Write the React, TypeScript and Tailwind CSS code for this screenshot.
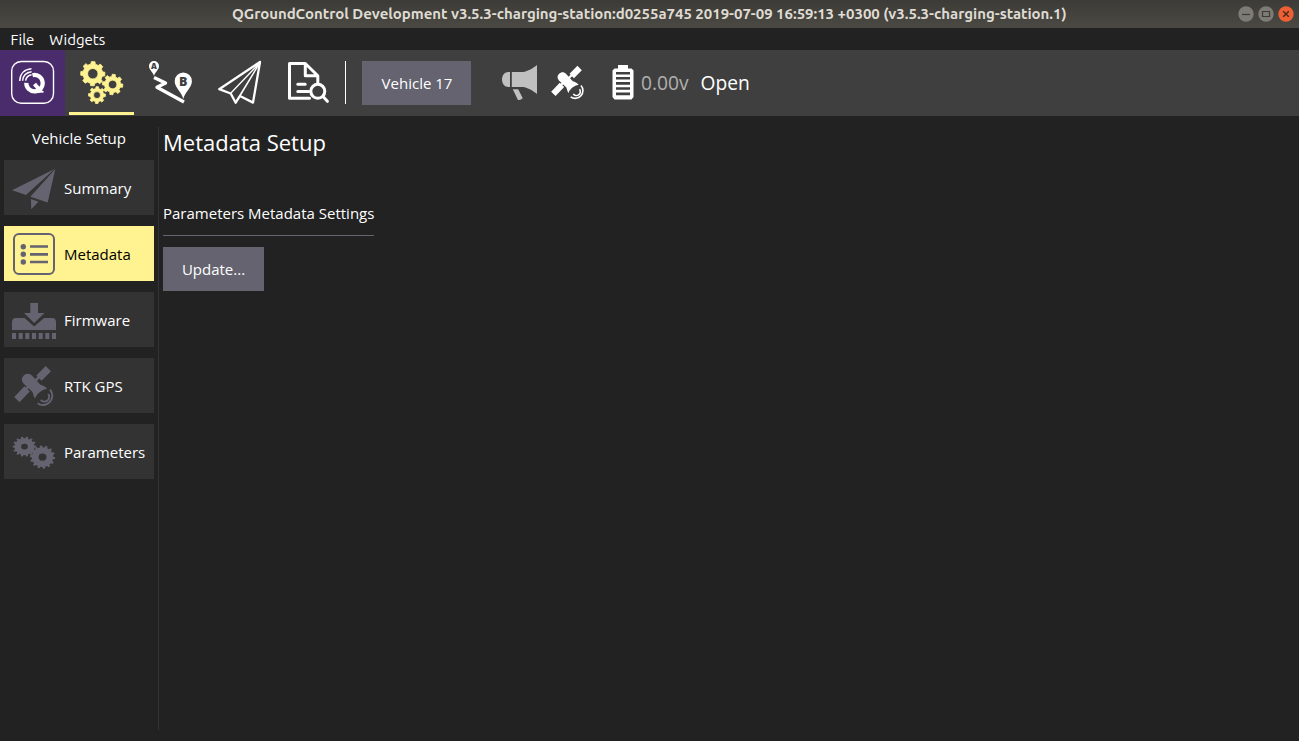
import React from 'react';

const polar = (cx: number, cy: number, r: number, a: number) =>
  `${(cx + r * Math.cos(a)).toFixed(2)} ${(cy + r * Math.sin(a)).toFixed(2)}`;

function gear(cx: number, cy: number, outer: number, inner: number, hole: number, teeth: number, phase = 0) {
  const step = (Math.PI * 2) / teeth;
  const points: string[] = [];
  for (let i = 0; i < teeth; i++) {
    const a = i * step + phase;
    points.push(polar(cx, cy, inner, a - step * 0.29));
    points.push(polar(cx, cy, outer, a - step * 0.19));
    points.push(polar(cx, cy, outer, a + step * 0.19));
    points.push(polar(cx, cy, inner, a + step * 0.29));
  }
  return `M${points.join('L')}ZM${cx - hole} ${cy}a${hole} ${hole} 0 1 0 ${hole * 2} 0a${hole} ${hole} 0 1 0 ${-hole * 2} 0Z`;
}

function LogoIcon() {
  return (
    <svg className="h-[66px] w-[65px]" viewBox="0 0 65 66" fill="none" stroke="#fff">
      <rect x="11.7" y="11.5" width="41.8" height="41.8" rx="9.5" strokeWidth="1.4" />
      <path d="M32.5 25.2A8.2 8.200 0 1 1 26.300 32.800" strokeWidth="4.200" />
      <path d="M34.500 34l6.500 7.500" strokeWidth="4" />
      <path d="M38 41.800h5.500" strokeWidth="1.800" />
      <path d="M25.600 30.600c.6-3.300 2.500-5.200 6-5.800M22.600 30.800c.4-5 3.500-8.300 9-9M19.700 31c.2-7 4.500-11.800 11.800-12.300" strokeWidth="1.500" />
    </svg>
  );
}

function GearsIcon() {
  return (
    <svg className="h-[62px] w-[65px]" viewBox="0 0 65 62" fill="#fff291" fillRule="evenodd" stroke="#fff291" strokeLinejoin="round" strokeWidth=".8">
      <path d={gear(23.8, 23.7, 12.2, 9.9, 5.2, 8, 0.03)} />
      <path d={gear(43.6, 34.5, 10.3, 8.1, 4.3, 8, 0.12)} />
      <path d={gear(28, 45.1, 8.500, 6.700, 3.500, 8, 0.03)} />
    </svg>
  );
}

function PlanIcon() {
  return (
    <svg className="h-[66px] w-[65px]" viewBox="0 0 65 66">
      <path d="M16 27.500l11.500 5.500-8.500 4.300 27 14.700" fill="none" stroke="#fff" strokeWidth="3.400" strokeLinejoin="round" />
      <path d="M16 26c-1-4-5-6-5-10a5 5 0 0 1 10 0c0 4-4 6-5 10ZM45.300 49c-1.500-7-8.600-11.500-8.600-17.800a8.600 8.600 0 0 1 17.200 0C53.900 37.500 46.800 42 45.300 49Z" fill="#fff" />
      <text x="16" y="19" textAnchor="middle" fontSize="8" fontWeight="800" fill="#3f3f3f" fontFamily="Open Sans, sans-serif">A</text>
      <text x="45.300" y="35.800" textAnchor="middle" fontSize="12.500" fontWeight="800" fill="#3f3f3f" fontFamily="Open Sans, sans-serif">B</text>
    </svg>
  );
}

function FlyIcon() {
  return (
    <svg className="h-[66px] w-[65px]" viewBox="0 0 65 66" fill="none" stroke="#fff" strokeLinejoin="round">
      <path d="M53 12L12.200 39.200l11.500 4.300 5 9.200 4.300-6.700 13 6.600Z" strokeWidth="2.300" />
      <path d="M53 12.500L23.700 43.300M53 12.500L28.700 52M53 12.500L33 46" strokeWidth="1.300" />
    </svg>
  );
}

function AnalyzeIcon() {
  return (
    <svg className="h-[66px] w-[65px]" viewBox="0 0 65 66" fill="none" stroke="#fff" strokeLinejoin="round" strokeLinecap="round" strokeWidth="3">
      <path d="M33.500 48.300H13.500V13.500h15.800l12.500 12.200v7.500M29.300 13.500v12.200h12.500" />
      <path d="M21.800 34.300h7.400M21.800 41.500h11" />
      <circle cx="41.800" cy="41.300" r="7" />
      <path d="M47.200 46.800l4.200 4.500" />
    </svg>
  );
}

function MegaphoneIcon() {
  return (
    <svg className="h-[35px] w-[35px]" viewBox="0 0 35 35" fill="#c0c0c0">
      <path d="M8 7v15H6.500C2.500 22 0 18.500 0 14.500S2.500 7 6.500 7ZM9.800 7H21C26 6.500 31 3 35 0v29c-4-3-9-6.500-14-7H9.800ZM10.800 24.200h5.400l4.300 8.600c.6 1.500-3.800 3-4.800 1.700Z" />
    </svg>
  );
}

function SatelliteIcon({ className }: { className: string }) {
  return (
    <svg className={className} viewBox="0 0 42 42" fill="currentColor">
      <path d="M31.700 1l5.300 5.300-9.500 9.500-5.200-5.300ZM10.500 21.200l5.300 5.300L5.500 37.300.2 32Z" />
      <path d="M9.500 10.800c3-3 6.500-2.300 8.700 0l8 8.700c2.500.6 5 2.200 7 4.300-5.700 1.200-10.200 4.700-12.200 9.700-1.500-2-1.700-4-2.500-6.500L9.500 18.500C7.300 16.200 7.200 13 9.500 10.800Z" />
      <path d="M12 24l4.500-4.500M21 16l5-5" stroke="currentColor" strokeWidth="2.500" />
      <path d="M34.200 29a4.700 4.700 0 0 1-7.400 5.800M36 24.600a9.300 9.300 0 0 1-12.400 13.700" fill="none" stroke="currentColor" strokeWidth="1.900" />
    </svg>
  );
}

function BatteryIcon() {
  return (
    <svg className="h-[35px] w-[22px]" viewBox="0 0 22 35">
      <path d="M6 0h10v3.500h3.500l2 2V32l-2 2.500h-17L.5 32V5.500l2-2H6Z" fill="#fff" />
      <path d="M4 8.200h14M4 13.300h14M4 18.400h14M4 23.500h14M4 28.900h14" stroke="#3f3f3f" strokeWidth="2.600" />
    </svg>
  );
}

function SummaryIcon() {
  return (
    <svg className="size-11" viewBox="0 0 44 44" fill="#64636f">
      <path d="M42.500 3L0 24.300l14 4.700ZM43.300 3L18.300 30.700 35.700 36.500ZM19 33l7.500 2.700-7.300 7.500Z" />
    </svg>
  );
}

function MetadataIcon() {
  return (
    <svg className="size-11" viewBox="0 0 44 44" fill="none" stroke="#64636f">
      <rect x="2" y="2" width="40" height="40" rx="5" strokeWidth="2" />
      <path d="M18 14.500h18M18 22.300h18M18 30h18" strokeWidth="2.700" />
      <g fill="#64636f" stroke="none">
        <circle cx="11.300" cy="14.700" r="2.700" />
        <circle cx="11.300" cy="22.300" r="2.700" />
        <circle cx="11.300" cy="30" r="2.700" />
      </g>
    </svg>
  );
}

function FirmwareIcon() {
  return (
    <svg className="size-11" viewBox="0 0 44 44" fill="#64636f">
      <path d="M18.300 5h7.700v10h6.500L22.200 25 12 15h6.300Z" />
      <path d="M4 20h8.500L22.200 28.500 32 20h8a4 4 0 0 1 4 4v8H0v-8a4 4 0 0 1 4-4Z" />
      <path d="M0 35h4v6H0ZM6.700 35h4v6h-4ZM13.300 35h4v6h-4ZM20 35h4v6h-4ZM26.700 35h4v6h-4ZM33.300 35h4v6h-4ZM40 35h4v6h-4Z" />
    </svg>
  );
}

function ParametersIcon() {
  return (
    <svg className="size-11" viewBox="0 0 44 44" fill="#64636f" fillRule="evenodd">
      <path d={gear(12.5, 16, 11.8, 9.9, 3.4, 14)} transform="translate(0 3) scale(1 .85)" />
      <path d={gear(30.5, 28.8, 12.6, 10.7, 4, 14, 0.1)} transform="translate(0 .6) scale(1 .92)" />
    </svg>
  );
}

const sections = [
  { label: 'Summary', icon: <SummaryIcon /> },
  { label: 'Metadata', icon: <MetadataIcon />, active: true },
  { label: 'Firmware', icon: <FirmwareIcon /> },
  { label: 'RTK GPS', icon: <SatelliteIcon className="ml-0.5 h-[42px] w-[42px] text-[#64636f]" /> },
  { label: 'Parameters', icon: <ParametersIcon /> },
];

function TitleBar() {
  return (
    <header className="flex h-7 shrink-0 items-center bg-linear-to-b from-[#3c3b37] to-[#4b4943] pr-[5px]">
      <h1 className="ml-[232px] w-[836px] whitespace-nowrap font-['Ubuntu','Noto_Sans',sans-serif] text-[15px]/7 font-bold tracking-[-0.025px] text-[#dfdbd2]">
        QGroundControl Development v3.5.3-charging-station:d0255a745 2019-07-09 16:59:13 +0300 (v3.5.3-charging-station.1)
      </h1>
      <div className="ml-auto flex gap-1">
        <svg className="size-4" viewBox="0 0 16 16"><circle cx="8" cy="8" r="7.700" fill="#7d7b75" /><path d="M4 8.500h8" stroke="#3c3b37" strokeWidth="1.200" /></svg>
        <svg className="size-4" viewBox="0 0 16 16"><circle cx="8" cy="8" r="7.700" fill="#7d7b75" /><path d="M4.500 5.500h7v5h-7Z" fill="none" stroke="#3c3b37" strokeWidth="1.200" /></svg>
        <svg className="size-4" viewBox="0 0 16 16"><circle cx="8" cy="8" r="7.700" fill="#ee6034" /><path d="M5.200 5.200l5.600 5.600M10.800 5.200l-5.600 5.600" stroke="#4b2a1c" strokeWidth="1.500" /></svg>
      </div>
    </header>
  );
}

export default function App() {
  return (
    <div className="flex h-[741px] w-[1299px] flex-col overflow-hidden bg-[#222222] font-['Open_Sans',sans-serif] text-[15px] text-white">
      <TitleBar />
      <nav className="flex h-[22px] shrink-0 items-center gap-[15px] pl-[10.6px] pt-0.5 font-['Ubuntu','Noto_Sans',sans-serif] text-[15px]">
        <span>File</span>
        <span>Widgets</span>
      </nav>

      <div className="flex h-[66px] shrink-0 items-center bg-[#3f3f3f]">
        <button className="h-full w-[65px] bg-[#4a2c6d]"><LogoIcon /></button>
        <button className="ml-1 h-[65px] w-[65px] self-start border-b-[3px] border-[#fff291]"><GearsIcon /></button>
        <button className="ml-1 w-[65px]"><PlanIcon /></button>
        <button className="ml-1 w-[65px]"><FlyIcon /></button>
        <button className="ml-1 w-[65px]"><AnalyzeIcon /></button>
        <div className="mb-px ml-1 h-[43px] w-px bg-white" />
        <button className="ml-4 h-11 w-[109px] bg-[#64636f] pl-px">Vehicle 17</button>
        <div className="mb-px ml-[31px]"><MegaphoneIcon /></div>
        <SatelliteIcon className="mb-px ml-[14px] h-[35px] w-[35px] text-white" />
        <div className="mb-px ml-[26px]"><BatteryIcon /></div>
        <span className="ml-[7px] w-[60px] text-[19.200px] text-[#b0b0b0]">0.00v</span>
        <span className="-ml-[0.5px] text-[19.200px]">Open</span>
      </div>

      <main className="flex min-h-0 flex-1">
        <aside className="w-[158px] shrink-0 pl-1 pt-[11px]">
          <h2 className="w-[150px] text-center text-[15px]/[22px]">Vehicle Setup</h2>
          <div className="mt-[11px] flex w-[150px] flex-col gap-[11px]">
            {sections.map((section) => (
              <button
                key={section.label}
                className={`flex h-[55px] items-center pl-2 text-left ${section.active ? 'bg-[#fff291] text-black' : 'bg-[#333333]'}`}
              >
                <span className="w-[52px]">{section.icon}</span>
                <span className="pt-px">{section.label}</span>
              </button>
            ))}
          </div>
        </aside>
        <div className="mb-[11px] mt-[11px] w-px bg-[#333333]" />
        <section className="pl-1 pt-2.5">
          <h2 className="text-[22px]/8">Metadata Setup</h2>
          <h3 className="mt-11 w-[211px] whitespace-nowrap border-b border-[#64636f] pb-[11px] text-[15px]/[22px]">Parameters Metadata Settings</h3>
          <button className="mt-[11px] h-11 w-[101px] bg-[#64636f]">Update...</button>
        </section>
      </main>
    </div>
  );
}
